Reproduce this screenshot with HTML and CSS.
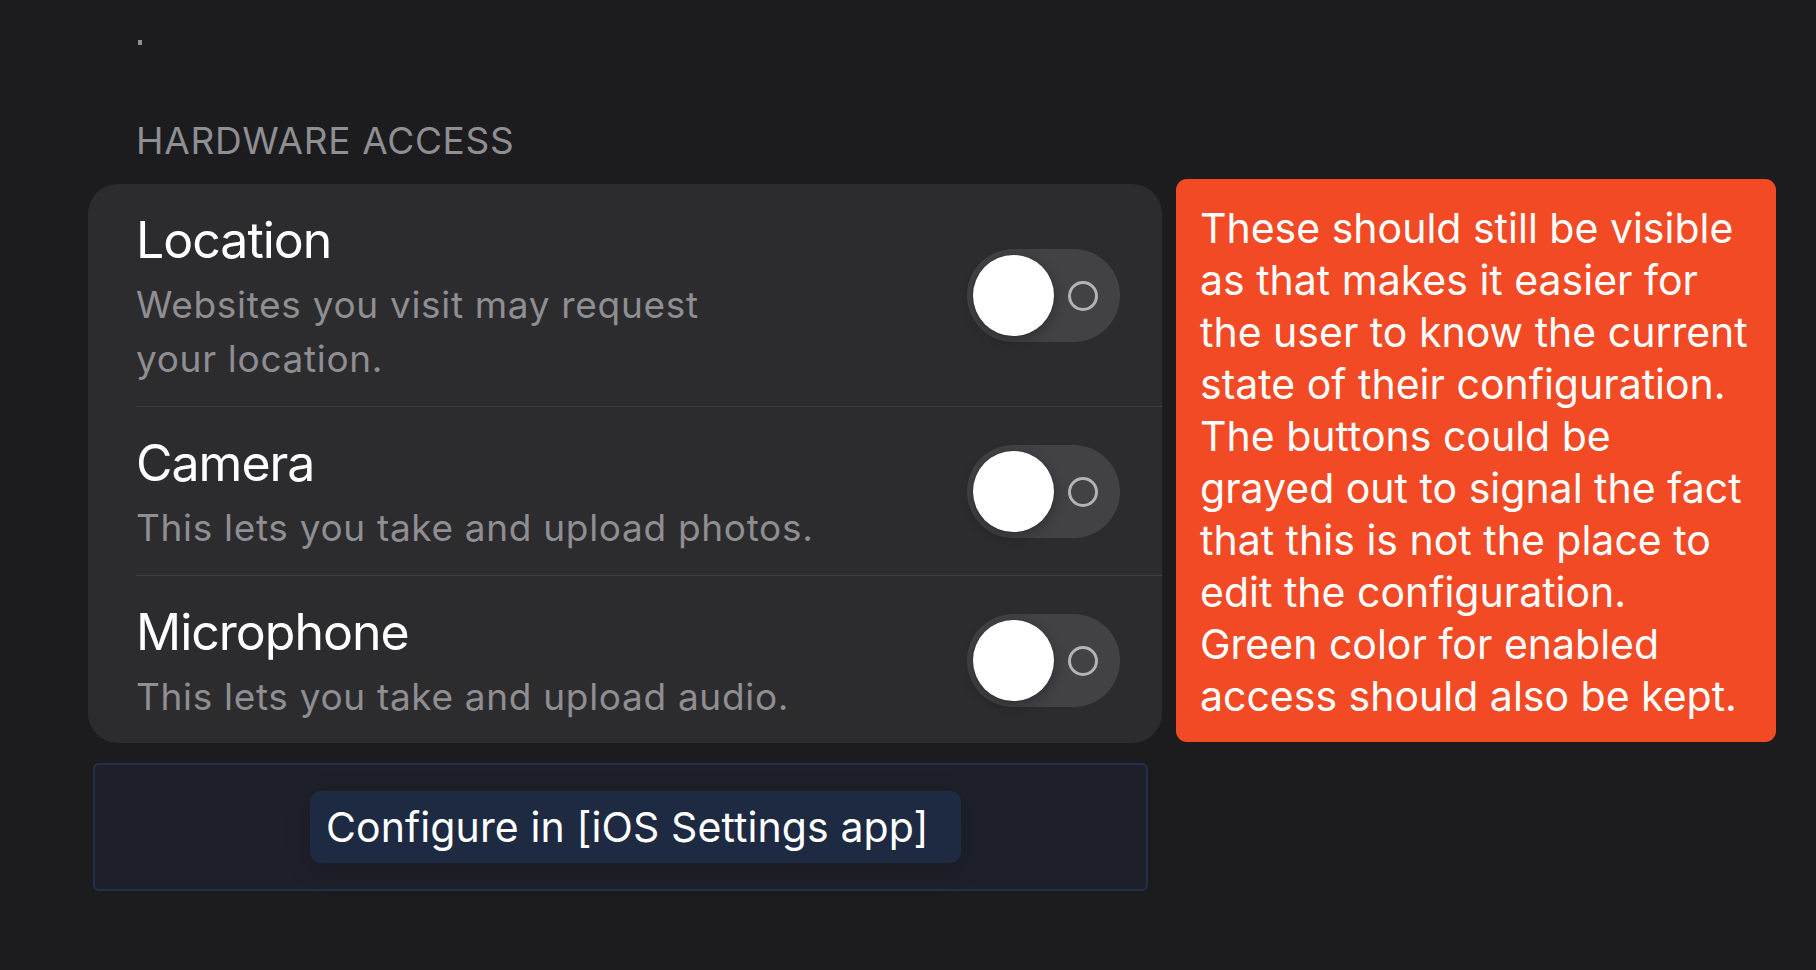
FILE: index.html
```html
<!DOCTYPE html>
<html lang="en">
<head>
<meta charset="utf-8">
<title>Hardware Access</title>
<link rel="stylesheet" href="styles.css">
</head>
<body>
<div class="page">
  <div class="main">
    <div class="top-mark"><span class="tick"></span></div>
    <div class="section-header">HARDWARE ACCESS</div>
    <div class="card">
      <div class="row">
        <div class="row-text">
          <div class="row-title">Location</div>
          <div class="row-desc">Websites you visit may request<br>your location.</div>
        </div>
        <div class="toggle"><span class="knob"></span><span class="off-ring"></span></div>
      </div>
      <div class="row">
        <div class="row-text">
          <div class="row-title">Camera</div>
          <div class="row-desc">This lets you take and upload photos.</div>
        </div>
        <div class="toggle"><span class="knob"></span><span class="off-ring"></span></div>
      </div>
      <div class="row last">
        <div class="row-text">
          <div class="row-title">Microphone</div>
          <div class="row-desc">This lets you take and upload audio.</div>
        </div>
        <div class="toggle"><span class="knob"></span><span class="off-ring"></span></div>
      </div>
    </div>
    <div class="configure">
      <button class="configure-btn">Configure in [iOS Settings app]</button>
    </div>
  </div>
  <aside class="note">These should still be visible<br>as that makes it easier for<br>the user to know the current<br>state of their configuration.<br>The buttons could be<br>grayed out to signal the fact<br>that this is not the place to<br>edit the configuration.<br>Green color for enabled<br>access should also be kept.</aside>
</div>
</body>
</html>
```

FILE: styles.css
```css
* { box-sizing: border-box; }

html, body {
  margin: 0;
  padding: 0;
  background: #1c1c1e;
}

body {
  font-family: "Inter", "Noto Sans", "Liberation Sans", sans-serif;
  color: #ffffff;
  width: 1816px;
  height: 970px;
  overflow: hidden;
}

.page {
  display: grid;
  grid-template-columns: 1074px 600px;
  column-gap: 14px;
  padding-left: 88px;
  align-items: start;
}

.main {
  display: flex;
  flex-direction: column;
  padding-top: 40px;
}

.top-mark {
  padding-left: 50px;
  height: 5px;
}

.tick {
  display: block;
  width: 4px;
  height: 5px;
  background: #8e8e93;
}

.section-header {
  margin-top: 74px;
  padding-left: 48px;
  font-size: 37px;
  line-height: 44px;
  color: #8e8e93;
  letter-spacing: 0.7px;
}

.card {
  margin-top: 21px;
  background: #2c2c2e;
  border-radius: 30px;
  overflow: hidden;
}

.row {
  display: flex;
  align-items: center;
  justify-content: space-between;
  margin-left: 48px;
  padding: 26px 42px 20px 0;
  border-bottom: 1px solid #3e3e42;
}

.row.last {
  border-bottom: none;
  padding-bottom: 19px;
}

.row-title {
  font-size: 50px;
  line-height: 60px;
  color: #ffffff;
  letter-spacing: -1px;
}

.row-desc {
  margin-top: 8px;
  font-size: 37px;
  line-height: 54px;
  color: #8e8e93;
  letter-spacing: 0.68px;
}

.toggle {
  position: relative;
  flex: none;
  width: 153px;
  height: 93px;
  margin-bottom: 6px;
  border-radius: 47px;
  background: #414146;
}

.knob {
  position: absolute;
  left: 6px;
  top: 6px;
  width: 81px;
  height: 81px;
  border-radius: 50%;
  background: #ffffff;
  box-shadow: 0 4px 14px rgba(0, 0, 0, 0.28), 0 0 0 1px rgba(0, 0, 0, 0.04);
}

.off-ring {
  position: absolute;
  left: 101px;
  top: 32px;
  width: 30px;
  height: 30px;
  border-radius: 50%;
  border: 3px solid #b3b3b6;
}

.configure {
  margin: 20px 14px 0 5px;
  height: 128px;
  background: #1e2029;
  border: 2px solid #21304c;
  border-radius: 6px;
  display: flex;
  align-items: center;
  justify-content: center;
  padding-left: 30px;
}

.configure-btn {
  font-family: "Inter", "Noto Sans", "Liberation Sans", sans-serif;
  font-size: 41px;
  line-height: 50px;
  color: #ffffff;
  background: #1d2a42;
  border: none;
  border-radius: 11px;
  height: 72px;
  width: 651px;
  padding: 0 16px 0 16px;
  text-align: left;
  letter-spacing: 0.1px;
  box-shadow: 0 6px 28px rgba(0, 0, 0, 0.18);
}

.note {
  margin-top: 179px;
  height: 563px;
  background: #f34a26;
  border-radius: 11px;
  padding: 23px 20px 20px 24px;
  font-size: 41px;
  line-height: 52px;
  color: #ffffff;
  white-space: nowrap;
}
```
